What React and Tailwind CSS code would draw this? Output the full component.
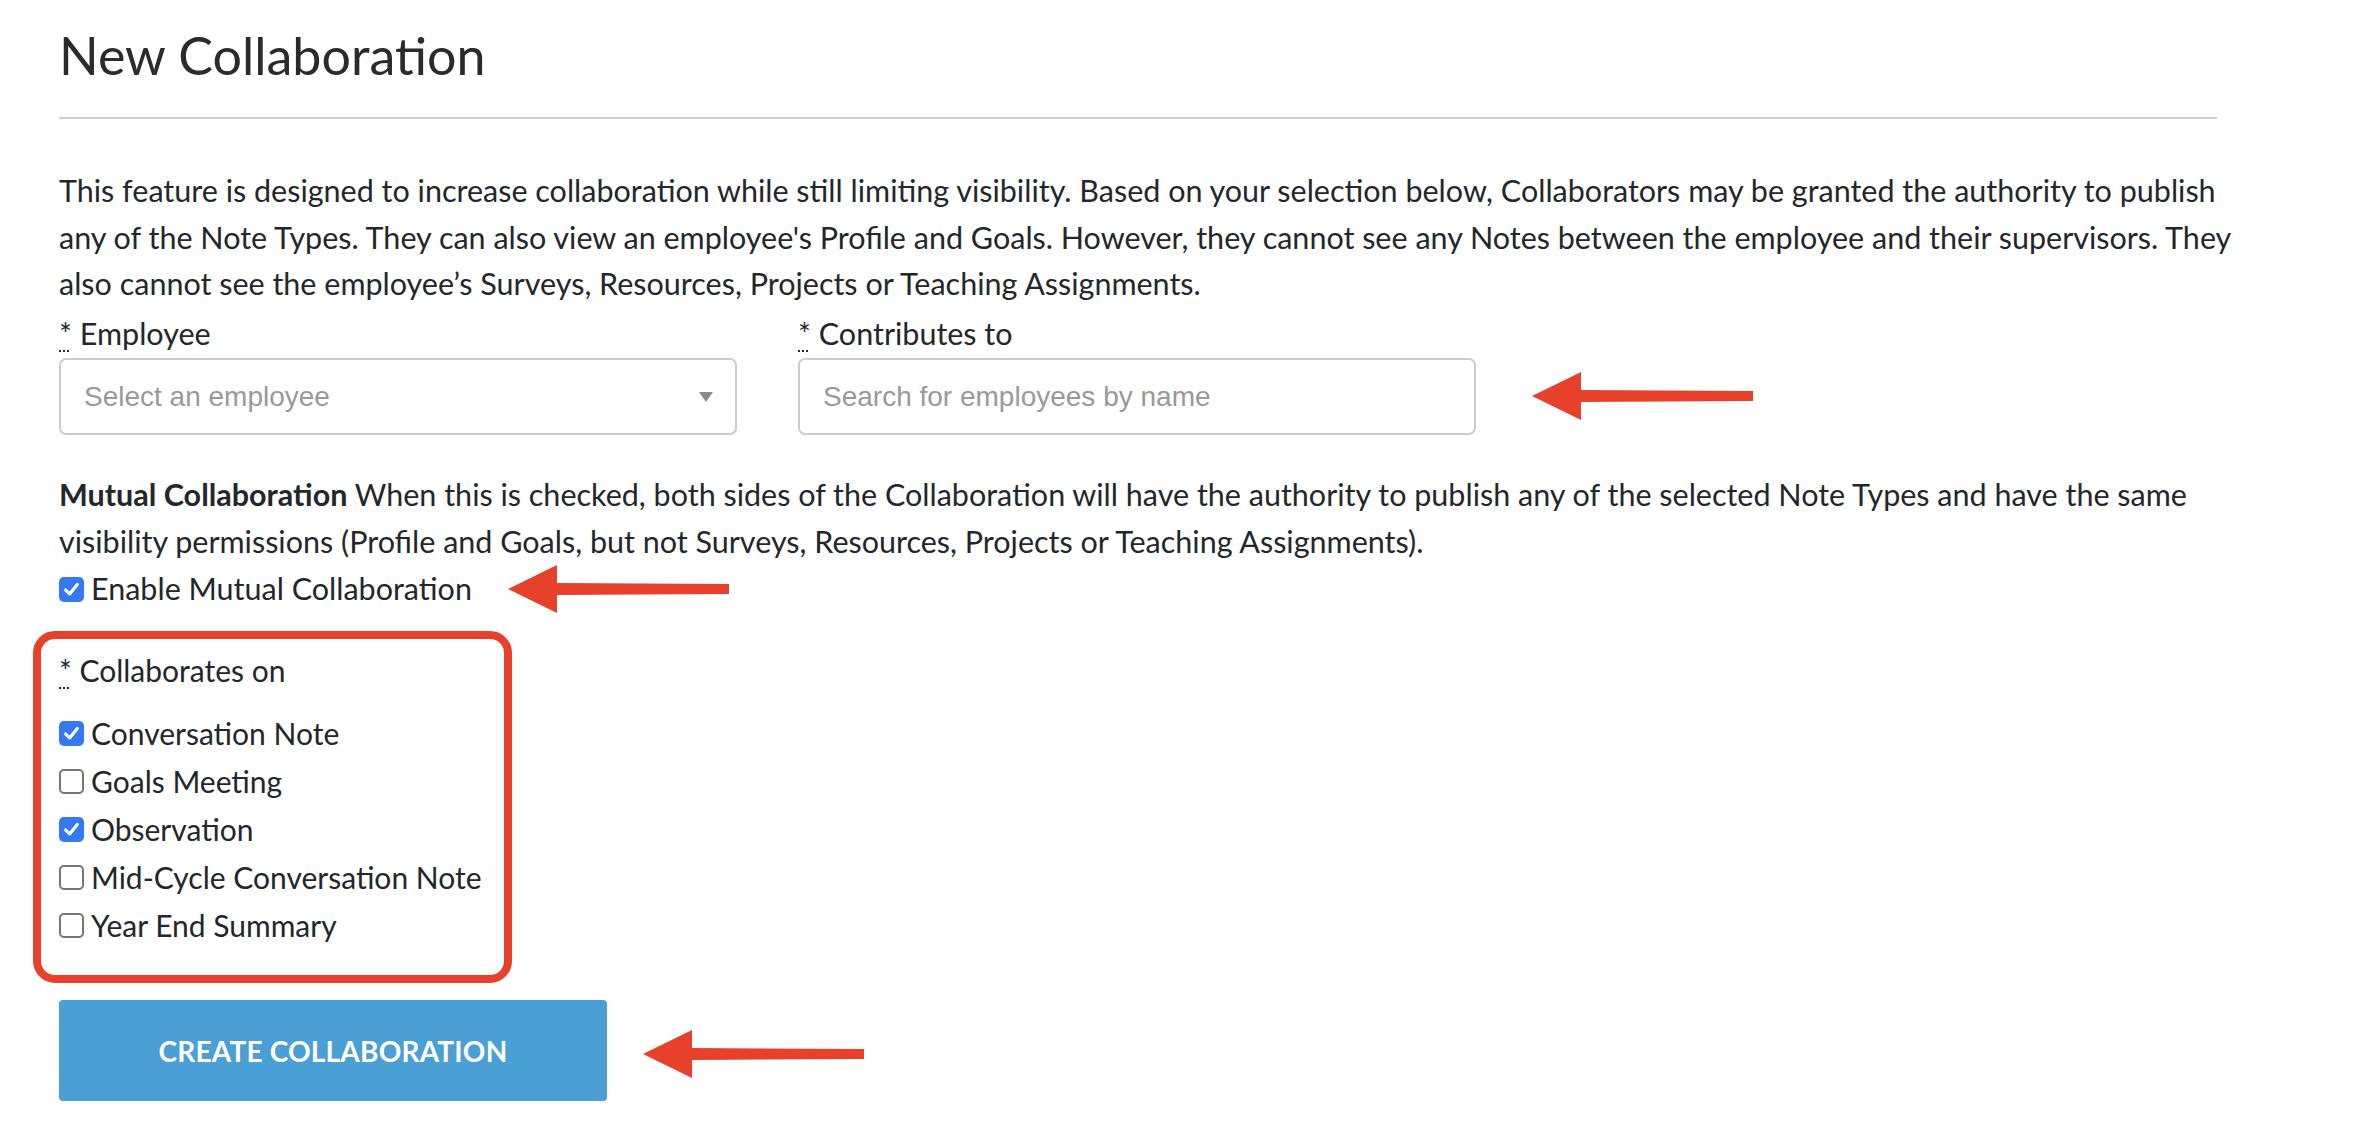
import React from "react";

const RED = "#e8412b";

function Arrow({ className }) {
  return (
    <svg className={className} width="224" height="52" viewBox="0 0 224 52">
      <polygon points="1,26 50,2 50,20 222,21 222,31 50,32 50,50" fill={RED} />
    </svg>
  );
}

function Box({ checked }) {
  if (checked) {
    return (
      <span className="inline-flex h-[25px] w-[25px] shrink-0 items-center justify-center rounded-[5px] bg-[#3478f6]">
        <svg width="19" height="19" viewBox="0 0 18 18">
          <path d="M3.5 9.5 L7.2 13.2 L14.5 4.2" fill="none" stroke="white" strokeWidth="3" strokeLinecap="round" strokeLinejoin="round" />
        </svg>
      </span>
    );
  }
  return <span className="inline-block h-[25px] w-[25px] shrink-0 rounded-[5px] border-2 border-[#767676] bg-white" />;
}

function Req() {
  return <span className="underline decoration-dotted decoration-2 underline-offset-[6px]">*</span>;
}

function CheckRow({ checked, label }) {
  return (
    <div className="flex h-[48px] items-center gap-[7px]">
      <Box checked={checked} />
      <span>{label}</span>
    </div>
  );
}

export default function App() {
  const body = "font-['Lato',sans-serif]";
  return (
    <div className={`min-h-[1140px] w-[2362px] bg-white text-[#23272b] ${body}`}>
      <div className="ml-[59px] w-[2158px]">
        <div className="flex h-[117px] items-end pb-[36px]">
          <h1 className="font-['Lato',sans-serif] text-[52px] leading-none text-[#2b2b2b]">New Collaboration</h1>
        </div>
        <div className="h-[2px] bg-[#cfcfcf]" />

        <p className="mt-[48px] text-[30.5px] leading-[46.5px]">
          <span className="block whitespace-nowrap">This feature is designed to increase collaboration while still limiting visibility. Based on your selection below, Collaborators may be granted the authority to publish</span>
          <span className="block whitespace-nowrap">any of the Note Types. They can also view an employee's Profile and Goals. However, they cannot see any Notes between the employee and their supervisors. They</span>
          <span className="block whitespace-nowrap">also cannot see the employee’s Surveys, Resources, Projects or Teaching Assignments.</span>
        </p>

        <div className="mt-[3px] flex text-[30.5px] leading-[46.5px]">
          <div className="w-[739px]"><Req /> Employee</div>
          <div><Req /> Contributes to</div>
        </div>

        <div className="relative mt-[2px] flex gap-[61px]">
          <div className="flex h-[77px] w-[678px] items-center justify-between rounded-[7px] border-2 border-[#cccccc] pl-[23px] pr-[22px] font-['Liberation_Sans',sans-serif] text-[28px] text-[#999999]">
            <span>Select an employee</span>
            <svg width="14" height="10" viewBox="0 0 14 10"><polygon points="0,0 14,0 7,10" fill="#8a8a8a" /></svg>
          </div>
          <div className="flex h-[77px] w-[678px] items-center rounded-[7px] border-2 border-[#cccccc] pl-[23px] font-['Liberation_Sans',sans-serif] text-[28px] text-[#999999]">
            Search for employees by name
          </div>
          <Arrow className="absolute left-[1472px] top-[12px]" />
        </div>

        <p className="mt-[36px] text-[30.5px] leading-[46.5px]">
          <span className="block whitespace-nowrap"><b className="font-bold">Mutual Collaboration</b> When this is checked, both sides of the Collaboration will have the authority to publish any of the selected Note Types and have the same</span>
          <span className="block whitespace-nowrap">visibility permissions (Profile and Goals, but not Surveys, Resources, Projects or Teaching Assignments).</span>
        </p>

        <div className="relative mt-[2px] flex h-[46.5px] items-center gap-[7px] text-[30.5px]">
          <Box checked />
          <span>Enable Mutual Collaboration</span>
          <Arrow className="absolute left-[448px] top-[-3px]" />
        </div>

        <div className="ml-[-26px] mt-[18px] w-[479px] rounded-[22px] border-[8px] border-[#e8412b] pb-[26px] pl-[18px] pt-[8px] text-[30px]">
          <div className="leading-[46.5px]"><Req /> Collaborates on</div>
          <div className="mt-[16px]">
            <CheckRow checked label="Conversation Note" />
            <CheckRow label="Goals Meeting" />
            <CheckRow checked label="Observation" />
            <CheckRow label="Mid-Cycle Conversation Note" />
            <CheckRow label="Year End Summary" />
          </div>
        </div>

        <div className="relative mt-[17px]">
          <button className="flex h-[101px] w-[548px] items-center justify-center rounded-[4px] bg-[#4aa0d5] font-['Lato',sans-serif] text-[28px] font-bold tracking-[0.2px] text-white">
            CREATE COLLABORATION
          </button>
          <Arrow className="absolute left-[583px] top-[28px]" />
        </div>
      </div>
    </div>
  );
}
